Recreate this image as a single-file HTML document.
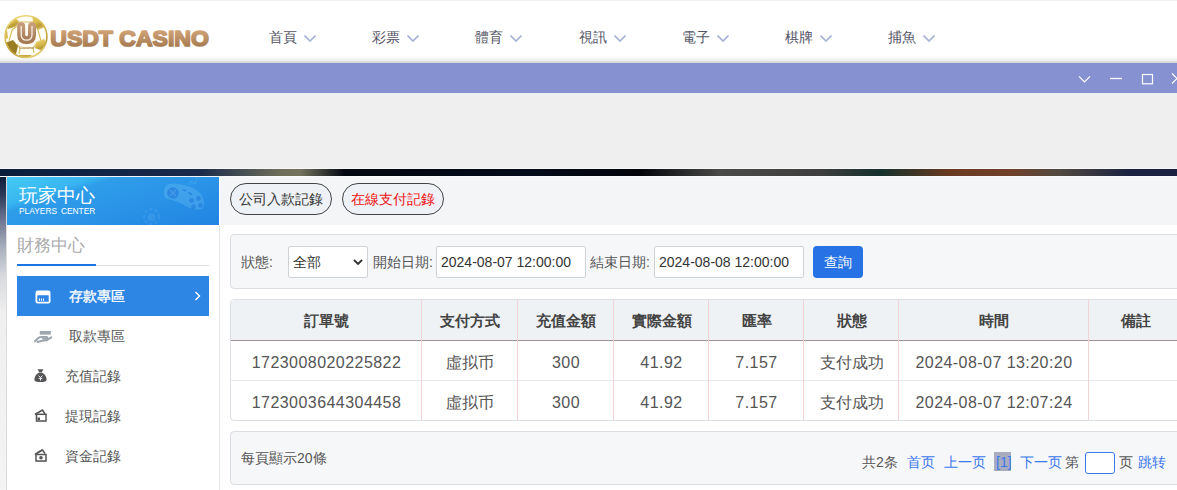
<!DOCTYPE html>
<html><head><meta charset="utf-8">
<style>
*{box-sizing:border-box;margin:0;padding:0}
html,body{width:1177px;height:490px;overflow:hidden;background:#efefef;font-family:"Liberation Sans",sans-serif;color:#555}
.abs{position:absolute}
#hdr{left:0;top:0;width:1177px;height:63px;background:#fff;border-top:1px solid #f0f0f0}
#hdr .shadow{left:0;top:55px;width:1177px;height:8px;background:linear-gradient(#fff 0%,#fafafa 25%,#ececec 55%,#d8d8d8 80%,#c6c6c6 100%)}
.nav{top:28px;font-size:14px;line-height:18px;color:#555566;white-space:nowrap}
.nav svg{position:absolute;top:7px}
#bar{left:0;top:63px;width:1177px;height:30px;background:#8591d0}
#strip{left:0;top:168px;width:1177px;height:9px;border-top:1px solid #f7f7f7;border-bottom:1px solid #fafafa;
 background:linear-gradient(90deg,#0a1e3c 0px,#1a2a4a 200px,#6e6e5a 280px,#74735e 300px,#020610 345px,#050a1a 530px,#020408 640px,#4a4a48 720px,#3e3e3e 820px,#14302c 880px,#6a3a20 950px,#70402a 1010px,#504a40 1060px,#1a2040 1130px,#1a2040 1177px)}
#lstrip{left:0;top:177px;width:6px;height:313px;background:linear-gradient(#0e1e3a 0px,#2c3a58 18px,#6a7490 42px,#a8aebc 70px,#d8dade 100px,#efefef 135px,#f4f4f4 313px)}
#side{left:6px;top:176px;width:214px;height:314px;background:#fff;border-left:1px solid #dcdcdc;border-top:1px solid #f4f4f4}
#shead{left:7px;top:177px;width:212px;height:48px;overflow:hidden;
 background:linear-gradient(162.5deg,#44cbf4 0%,#38b6f0 24%,#2e9de9 31%,#2a93e7 60%,#2083e1 100%)}
#sep{left:219px;top:225px;width:1px;height:265px;background:#e4e6ea}
#ctop{left:220px;top:177px;width:957px;height:48px;background:#f4f5f7}
#cbody{left:220px;top:225px;width:957px;height:265px;background:#fff}
.pill{height:32px;top:183px;width:102px;border:1px solid #444;border-radius:16px;background:#eef1f5;font-size:14px;line-height:30px;text-align:center;color:#333}
.panel{background:#f6f7f9;border:1px solid #dadde2;border-radius:4px}
.lbl{font-size:14px;line-height:18px;color:#555;white-space:nowrap}
.inp{height:32px;top:246px;background:#fff;border:1px solid #cfd3d8;border-radius:2px;font-size:14px;line-height:30px;color:#333;padding-left:4px;white-space:nowrap}
table{border-collapse:collapse}
#tbl{left:230px;top:299px;width:955px;height:122px;border:1px solid #dcdfe4;border-radius:4px;overflow:hidden;background:#fff}
.th{position:absolute;top:0;height:41px;background:#eef2f5;border-bottom:1px solid #9c9292;font-size:15px;font-weight:bold;color:#444;line-height:41px;text-align:center}
.td{position:absolute;height:40px;font-size:16px;line-height:40px;text-align:center;color:#555;white-space:nowrap}
.vl{position:absolute;top:0;width:1px;height:122px;background:#f3d3d6}
.hl{position:absolute;left:0;width:955px;height:1px;background:#e8e8ea}
.num{letter-spacing:0.45px}
.pg{font-size:14px;line-height:18px;white-space:nowrap;top:453px}
.blue{color:#3a78ee}
.menu{left:65px;font-size:14px;line-height:18px;color:#555;white-space:nowrap}
</style></head><body>

<!-- header -->
<div id="hdr" class="abs"><div class="shadow abs"></div></div>

<!-- logo -->
<svg class="abs" style="left:0;top:10px" width="220" height="52" viewBox="0 10 220 52">
 <defs>
  <linearGradient id="gold" x1="0.2" y1="0" x2="0.6" y2="1">
   <stop offset="0" stop-color="#ecd57a"/><stop offset="0.45" stop-color="#d9bb4c"/><stop offset="0.75" stop-color="#b89a36"/><stop offset="1" stop-color="#e4cc70"/>
  </linearGradient>
  <linearGradient id="bronze" x1="0" y1="0" x2="0" y2="1">
   <stop offset="0" stop-color="#dcae82"/><stop offset="1" stop-color="#9c7248"/>
  </linearGradient>
  <linearGradient id="ubr" x1="0" y1="0" x2="0" y2="1">
   <stop offset="0" stop-color="#c49a78"/><stop offset="1" stop-color="#a67a56"/>
  </linearGradient>
  <clipPath id="ballclip"><circle cx="26" cy="36.6" r="20.6"/></clipPath>
 </defs>
 <circle cx="26" cy="36.6" r="21.2" fill="#fffdf4"/>
 <g clip-path="url(#ballclip)">
  <g stroke="#d8bd5a" stroke-width="1.1" fill="none">
   <path d="M16 27 L19 22 L33 22 L36 27 M36 27 L38 30 M16 27 L12 30 M36 44 L33 48 L20 48 L17 44 M20 48 L19 54 M33 48 L34 53 M12 30 L9 41 M38 30 L41 41"/>
  </g>
  <path d="M32 15 L42 18 L45 27 L38 30 L33 22 Z" fill="url(#gold)"/>
  <path d="M6 23 L14 17 L19 21.5 L15 27 L8 29 Z" fill="url(#gold)"/>
  <path d="M5 43 L13 40 L18 46 L16 54 L8 52 Z" fill="#9a7c22"/>
  <path d="M36 42 L44 39 L48 44 L43 51 L35 48 Z" fill="url(#gold)"/>
  <path d="M19 55 L31 55 L34 60 L17 60 Z" fill="#c8aa40"/>
  <path d="M3 31 L7 30 L8 38 L3 40 Z" fill="#d6ba50"/>
  <path d="M46 30 L49 31 L49 39 L46 38 Z" fill="#d6ba50"/>
 </g>
 <circle cx="26" cy="36.6" r="20.9" fill="none" stroke="url(#gold)" stroke-width="1.6"/>
 <path d="M21.2 26.2 V34.8 Q21.2 40.2 26.6 40.2 Q32 40.2 32 34.8 V26.2" stroke="url(#ubr)" stroke-width="8" stroke-linecap="round" fill="none"/>
 <path d="M21.2 26.5 V34.8 Q21.2 40.2 26.6 40.2 Q32 40.2 32 34.8 V26.5" stroke="#f8efe4" stroke-width="1.3" stroke-linecap="round" fill="none"/>
 <text x="19" y="49" font-size="4.4" fill="#a07a58" font-family="Liberation Sans" textLength="15.5" lengthAdjust="spacingAndGlyphs">Casino</text>
 <text x="50.3" y="45.6" font-size="22.6" font-weight="bold" fill="url(#bronze)" stroke="url(#bronze)" stroke-width="1.7" stroke-linejoin="round" font-family="Liberation Sans" textLength="158.5" lengthAdjust="spacingAndGlyphs">USDT CASINO</text>
</svg>

<!-- nav -->
<div class="abs nav" style="left:269px">首頁<svg width="12" height="7" style="left:35px"><path d="M0.5 0.5 L6 6 L11.5 0.5" stroke="#a9b3d8" stroke-width="1.7" fill="none"/></svg></div>
<div class="abs nav" style="left:372px">彩票<svg width="12" height="7" style="left:35px"><path d="M0.5 0.5 L6 6 L11.5 0.5" stroke="#a9b3d8" stroke-width="1.7" fill="none"/></svg></div>
<div class="abs nav" style="left:475px">體育<svg width="12" height="7" style="left:35px"><path d="M0.5 0.5 L6 6 L11.5 0.5" stroke="#a9b3d8" stroke-width="1.7" fill="none"/></svg></div>
<div class="abs nav" style="left:579px">視訊<svg width="12" height="7" style="left:35px"><path d="M0.5 0.5 L6 6 L11.5 0.5" stroke="#a9b3d8" stroke-width="1.7" fill="none"/></svg></div>
<div class="abs nav" style="left:682px">電子<svg width="12" height="7" style="left:35px"><path d="M0.5 0.5 L6 6 L11.5 0.5" stroke="#a9b3d8" stroke-width="1.7" fill="none"/></svg></div>
<div class="abs nav" style="left:785px">棋牌<svg width="12" height="7" style="left:35px"><path d="M0.5 0.5 L6 6 L11.5 0.5" stroke="#a9b3d8" stroke-width="1.7" fill="none"/></svg></div>
<div class="abs nav" style="left:888px">捕魚<svg width="12" height="7" style="left:35px"><path d="M0.5 0.5 L6 6 L11.5 0.5" stroke="#a9b3d8" stroke-width="1.7" fill="none"/></svg></div>

<!-- purple bar -->
<div id="bar" class="abs">
 <svg class="abs" style="left:0;top:0" width="1177" height="30">
  <path d="M1079 13.3 L1084.5 18.8 L1090 13.3" stroke="#fff" stroke-width="1.2" fill="none"/>
  <path d="M1110 15.5 L1122 15.5" stroke="#fff" stroke-width="1.3"/>
  <rect x="1142.5" y="11.5" width="10" height="9.3" stroke="#fff" stroke-width="1.2" fill="none"/>
  <path d="M1172 10.5 L1182 20.5 M1182 10.5 L1172 20.5" stroke="#fff" stroke-width="1.2"/>
 </svg>
</div>

<div id="strip" class="abs"></div>
<div id="lstrip" class="abs"></div>
<div id="side" class="abs"></div>
<div id="shead" class="abs">
 <svg class="abs" style="left:0;top:0" width="212" height="48">
  <g fill="#5cb6f2" opacity="0.45">
   <path d="M157 13 Q158 6 167 6.5 Q176 7 186 11 Q195 15 197 25 Q198 33 191 32.5 Q183 32 175 27 Q168 23 160 22 Q156 20 157 13 Z"/>
  </g>
  <path d="M182 8 L184 4 L188 7 L190 2 L189 0" stroke="#5cb6f2" stroke-width="1" fill="none" opacity="0.45"/>
  <g fill="#2a86e0" opacity="0.9">
   <circle cx="166" cy="16" r="5.8"/>
   <circle cx="184.5" cy="23.5" r="2.4"/><circle cx="191.5" cy="21.5" r="2.4"/><circle cx="186.5" cy="30" r="2.4"/><circle cx="193.5" cy="28.5" r="2.4"/>
  </g>
  <path d="M163 13 L169 19 M169 13 L163 19" stroke="#4aa0ea" stroke-width="1.3" opacity="0.8"/>
  <path d="M176 12.5 L179 14 M181.5 15.5 L185 17.5" stroke="#2a86e0" stroke-width="1.6"/>
  <g opacity="0.14" fill="none" stroke="#8fd0ff">
   <circle cx="144.5" cy="39.5" r="7.5" stroke-width="2" stroke-dasharray="3 2.5"/>
   <circle cx="144.5" cy="40.5" r="4" fill="#8fd0ff" stroke="none"/>
  </g>
 </svg>
 <div class="abs" style="left:12px;top:7px;font-size:19px;line-height:24px;color:#fff;white-space:nowrap">玩家中心</div>
 <div class="abs" style="left:12px;top:29px;font-size:8.4px;line-height:10px;color:#fff;white-space:nowrap;letter-spacing:0px;word-spacing:1.6px">PLAYERS CENTER</div>
</div>

<!-- sidebar menu -->
<div class="abs" style="left:17px;top:235px;font-size:17px;line-height:22px;color:#aaa;white-space:nowrap">財務中心</div>
<div class="abs" style="left:17px;top:265px;width:192px;height:1px;background:#dcdcdc"></div>
<div class="abs" style="left:17px;top:264px;width:79px;height:2px;background:#1d74e4"></div>
<div class="abs" style="left:17px;top:276px;width:192px;height:40px;background:#2d86e3"></div>
<svg class="abs" style="left:34px;top:289px" width="18" height="16">
 <rect x="1.5" y="1.5" width="15" height="13" rx="2.2" fill="#fff"/>
 <rect x="3.3" y="6.3" width="11.4" height="6.4" rx="0.5" fill="#2d86e3"/>
 <path d="M5.5 9.5 V11.8 M7.5 9.5 V11.8 M9.5 9.5 V11.8" stroke="#fff" stroke-width="1"/>
</svg>
<div class="abs menu" style="left:69px;top:287px;color:#fff;-webkit-text-stroke:0.35px #fff">存款專區</div>
<svg class="abs" style="left:194px;top:291px" width="8" height="10"><path d="M1.5 1 L5.5 5 L1.5 9" stroke="#fff" stroke-width="1.4" fill="none"/></svg>

<svg class="abs" style="left:33px;top:330px" width="20" height="14">
 <rect x="6.8" y="1" width="11" height="3.6" fill="#9ea6b0"/>
 <path d="M2 11.3 L5 8.3 Q6.5 7.1 9 7.1 H13.3 Q15 7.3 14 8.7 H10" stroke="#9ea6b0" stroke-width="2" fill="none" stroke-linecap="round" stroke-linejoin="round"/>
 <path d="M4.6 12 Q8 10.4 11.5 10.4 Q14.5 10.4 18.3 7.4" stroke="#9ea6b0" stroke-width="2" fill="none" stroke-linecap="round"/>
</svg>
<div class="abs menu" style="left:69px;top:327px">取款專區</div>

<svg class="abs" style="left:33px;top:368px" width="15" height="15">
 <path d="M4.5 1.3 L10.5 1.3 L8.8 4 L6.2 4 Z" fill="#555"/>
 <path d="M6 4.6 Q1.2 7.5 1.4 12 Q1.6 14 7.5 14 Q13.4 14 13.6 12 Q13.8 7.5 9 4.6 Z" fill="#555"/>
 <path d="M5.6 7.6 L7.5 9.6 L9.4 7.6 M7.5 9.6 V12.6 M5.7 10.4 H9.3" stroke="#e8eef8" stroke-width="1" fill="none"/>
</svg>
<div class="abs menu" style="top:367px">充值記錄</div>

<svg class="abs" style="left:33px;top:409px" width="15" height="14">
 <path d="M1.8 5.5 L9.5 1 L12 5" stroke="#555" stroke-width="1.5" fill="none" stroke-linejoin="round"/>
 <rect x="3.5" y="5.3" width="9.5" height="6.7" stroke="#555" stroke-width="1.5" fill="none"/>
 <rect x="4.5" y="8.5" width="2.5" height="2.5" fill="#555"/>
 <path d="M4 12 H13" stroke="#777" stroke-width="1"/>
</svg>
<div class="abs menu" style="top:407px">提現記錄</div>

<svg class="abs" style="left:33px;top:449px" width="15" height="14">
 <path d="M1.8 5.5 L9.5 1 L12 4.5" stroke="#555" stroke-width="1.5" fill="none" stroke-linejoin="round"/>
 <path d="M4 3.5 L9 0.8" stroke="#555" stroke-width="1"/>
 <rect x="3" y="5.5" width="10" height="6.5" stroke="#555" stroke-width="1.5" fill="none"/>
 <circle cx="8" cy="8.8" r="1.8" fill="#555"/>
 <path d="M3 12.5 H13" stroke="#777" stroke-width="1"/>
</svg>
<div class="abs menu" style="top:447px">資金記錄</div>

<!-- content -->
<div id="sep" class="abs"></div>
<div id="ctop" class="abs"></div>
<div id="cbody" class="abs"></div>

<div class="abs pill" style="left:230px">公司入款記錄</div>
<div class="abs pill" style="left:342px;color:#ee1111">在線支付記錄</div>

<div class="abs panel" style="left:230px;top:234px;width:960px;height:55px"></div>
<div class="abs lbl" style="left:241px;top:253px">狀態:</div>
<div class="abs inp" style="left:288px;width:80px;padding-left:4px">全部
 <svg class="abs" style="left:64px;top:12px" width="10" height="7"><path d="M1 1 L5 5 L9 1" stroke="#333" stroke-width="1.8" fill="none"/></svg>
</div>
<div class="abs lbl" style="left:373px;top:253px">開始日期:</div>
<div class="abs inp" style="left:436px;width:150px">2024-08-07 12:00:00</div>
<div class="abs lbl" style="left:590px;top:253px">結束日期:</div>
<div class="abs inp" style="left:654px;width:150px">2024-08-08 12:00:00</div>
<div class="abs" style="left:813px;top:246px;width:50px;height:32px;background:#2773e6;border-radius:4px;color:#fff;font-size:14px;line-height:32px;text-align:center">查詢</div>

<!-- table -->
<div id="tbl" class="abs">
 <div class="th" style="left:0;width:191px">訂單號</div>
 <div class="th" style="left:191px;width:96px">支付方式</div>
 <div class="th" style="left:287px;width:96px">充值金額</div>
 <div class="th" style="left:383px;width:95px">實際金額</div>
 <div class="th" style="left:478px;width:95px">匯率</div>
 <div class="th" style="left:573px;width:95px">狀態</div>
 <div class="th" style="left:668px;width:190px">時間</div>
 <div class="th" style="left:858px;width:93px">備註</div>
 <div class="hl" style="top:80px"></div>
 <div class="td num" style="top:43px;left:0;width:191px">1723008020225822</div>
 <div class="td" style="top:43px;left:191px;width:96px">虛拟币</div>
 <div class="td num" style="top:43px;left:287px;width:96px">300</div>
 <div class="td num" style="top:43px;left:383px;width:95px">41.92</div>
 <div class="td num" style="top:43px;left:478px;width:95px">7.157</div>
 <div class="td" style="top:43px;left:573px;width:95px">支付成功</div>
 <div class="td num" style="top:43px;left:668px;width:190px">2024-08-07 13:20:20</div>
 <div class="td num" style="top:83px;left:0;width:191px">1723003644304458</div>
 <div class="td" style="top:83px;left:191px;width:96px">虛拟币</div>
 <div class="td num" style="top:83px;left:287px;width:96px">300</div>
 <div class="td num" style="top:83px;left:383px;width:95px">41.92</div>
 <div class="td num" style="top:83px;left:478px;width:95px">7.157</div>
 <div class="td" style="top:83px;left:573px;width:95px">支付成功</div>
 <div class="td num" style="top:83px;left:668px;width:190px">2024-08-07 12:07:24</div>
 <div class="vl" style="left:190px"></div>
 <div class="vl" style="left:286px"></div>
 <div class="vl" style="left:382px"></div>
 <div class="vl" style="left:477px"></div>
 <div class="vl" style="left:572px"></div>
 <div class="vl" style="left:667px"></div>
 <div class="vl" style="left:857px"></div>
</div>

<!-- pagination -->
<div class="abs panel" style="left:230px;top:431px;width:960px;height:54px"></div>
<div class="abs pg" style="left:241px;top:449px">每頁顯示20條</div>
<div class="abs pg" style="left:862px">共2条</div>
<div class="abs pg blue" style="left:907px">首页</div>
<div class="abs pg blue" style="left:944px">上一页</div>
<div class="abs" style="left:994px;top:452px;width:17px;height:19px;background:#a9abbe"></div>
<div class="abs pg blue" style="left:996px">[1]</div>
<div class="abs pg blue" style="left:1020px">下一页</div>
<div class="abs pg" style="left:1065px">第</div>
<div class="abs" style="left:1085px;top:452px;width:30px;height:22px;background:#fff;border:1px solid #3a78ee;border-radius:3px"></div>
<div class="abs pg" style="left:1119px">页</div>
<div class="abs pg blue" style="left:1138px">跳转</div>

</body></html>
